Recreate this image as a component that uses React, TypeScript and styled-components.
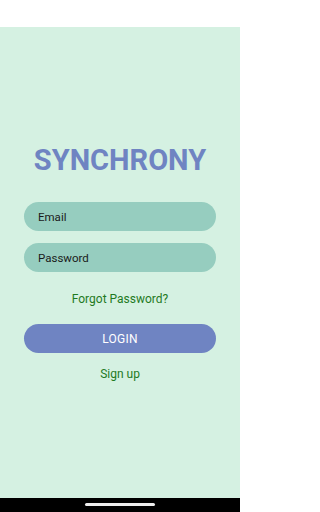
import React from 'react';
import styled, { createGlobalStyle } from 'styled-components';

const Global = createGlobalStyle`
  html, body { margin: 0; padding: 0; }
  body { font-family: Roboto, "Noto Sans", sans-serif; }
`;

const Screen = styled.div`
  width: 240px;
  height: 512px;
  display: flex;
  flex-direction: column;
  background: #fff;
`;

const StatusBar = styled.div`
  height: 27px;
  background: #fff;
`;

const Content = styled.main`
  flex: 1;
  background: #d5f1e2;
  display: flex;
  flex-direction: column;
  align-items: center;
  padding: 115px 24px 0;
`;

const Title = styled.h1`
  margin: 0;
  font-size: 29px;
  line-height: 36px;
  font-weight: 700;
  color: #6f84c2;
`;

const Field = styled.input<{ $gap: number }>`
  box-sizing: border-box;
  width: 192px;
  height: 29px;
  border: none;
  border-radius: 15px;
  background: #96cdbf;
  padding: 0 14px;
  font-family: Roboto, sans-serif;
  font-size: 11.5px;
  color: #1a1a1a;
  outline: none;
  margin-top: ${({ $gap }) => $gap}px;
  &::placeholder { color: #1a1a1a; }
`;

const LinkText = styled.a<{ $gap: number }>`
  margin-top: ${({ $gap }) => $gap}px;
  font-size: 12px;
  line-height: 14px;
  color: #1f7a1f;
  text-decoration: none;
`;

const LoginButton = styled.button`
  width: 192px;
  height: 29px;
  margin-top: 18px;
  border: none;
  border-radius: 15px;
  background: #6f84c2;
  color: #fff;
  font-family: Roboto, sans-serif;
  font-size: 12px;
  letter-spacing: 0.2px;
`;

const NavBar = styled.div`
  height: 14px;
  background: #000;
  display: flex;
  justify-content: center;
  align-items: flex-start;
`;

const Handle = styled.div`
  width: 70px;
  height: 3px;
  margin-top: 5px;
  border-radius: 2px;
  background: #eee;
`;

export default function App() {
  return (
    <>
      <Global />
      <Screen>
        <StatusBar />
        <Content>
          <Title>SYNCHRONY</Title>
          <Field $gap={24} placeholder="Email" />
          <Field $gap={12} type="password" placeholder="Password" />
          <LinkText $gap={20}>Forgot Password?</LinkText>
          <LoginButton>LOGIN</LoginButton>
          <LinkText $gap={14}>Sign up</LinkText>
        </Content>
        <NavBar>
          <Handle />
        </NavBar>
      </Screen>
    </>
  );
}
